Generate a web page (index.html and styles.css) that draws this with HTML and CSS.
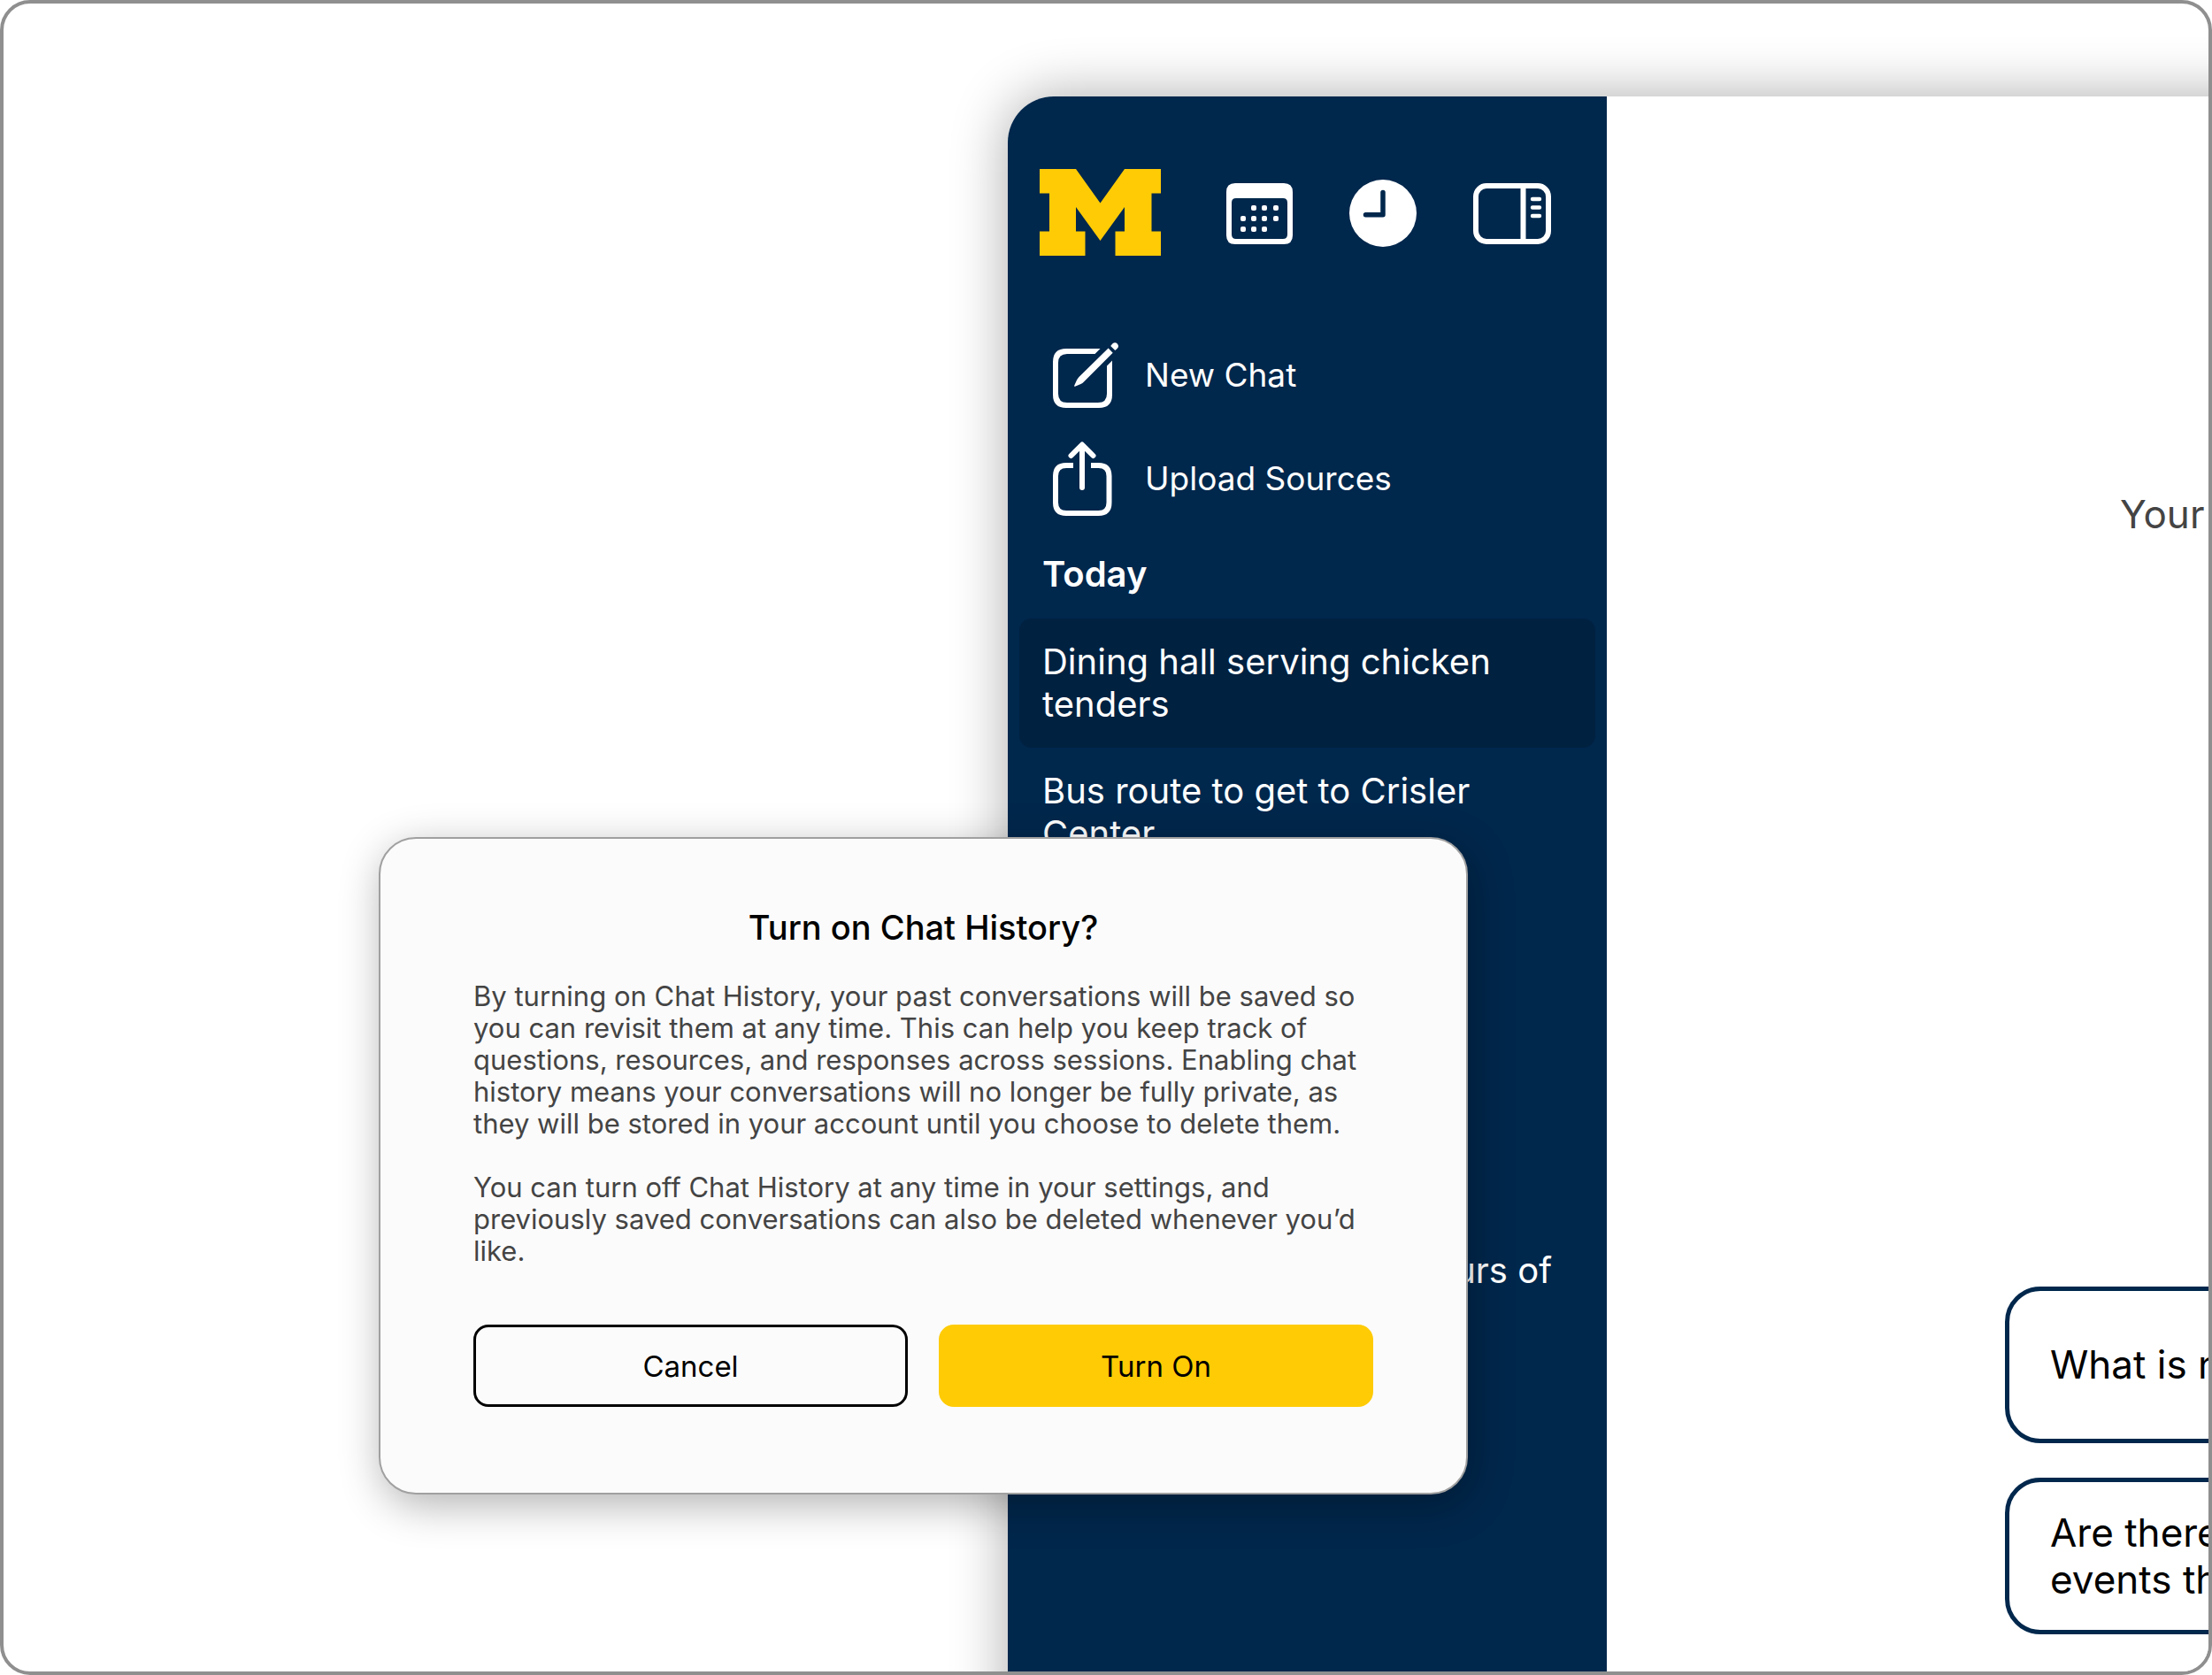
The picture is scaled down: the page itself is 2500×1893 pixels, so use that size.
FILE: index.html
```html
<!DOCTYPE html>
<html lang="en">
<head>
<meta charset="utf-8">
<title>Chat History</title>
<link rel="stylesheet" href="styles.css">
</head>
<body>
<div class="frame">
  <div class="window">
    <aside class="sidebar">
      <header class="sidebar-header">
        <svg class="logo" width="137" height="98" viewBox="0 0 137 98" role="img" aria-label="Michigan"><path fill="#ffcb05" d="M0 0H41L68.500 38.500L96 0H137V27.500H126.500V70.500H137V98H85.500V70.500H96V43L68.500 81L41 43V70.500H51.500V98H0V70.500H11V27.500H0Z"/></svg>
        <nav class="tools">
          <button class="tool" type="button" aria-label="Calendar">
            <svg width="75" height="69" viewBox="0 0 75 69" fill="#fff"><path fill-rule="evenodd" d="M10 0H65Q75 0 75 10V59Q75 69 65 69H10Q0 69 0 59V10Q0 0 10 0ZM11 17Q6 17 6 22V58Q6 63 11 63H64Q69 63 69 58V22Q69 17 64 17Z"/>
              <rect x="28" y="25" width="6" height="6" rx="2"/><rect x="40" y="25" width="6" height="6" rx="2"/><rect x="53" y="25" width="6" height="6" rx="2"/>
              <rect x="16" y="37" width="6" height="6" rx="2"/><rect x="28" y="37" width="6" height="6" rx="2"/><rect x="40" y="37" width="6" height="6" rx="2"/><rect x="53" y="37" width="6" height="6" rx="2"/>
              <rect x="16" y="49" width="6" height="6" rx="2"/><rect x="28" y="49" width="6" height="6" rx="2"/><rect x="40" y="49" width="6" height="6" rx="2"/></svg>
          </button>
          <button class="tool" type="button" aria-label="History">
            <svg width="76" height="76" viewBox="0 0 76 76"><circle cx="38" cy="38" r="38" fill="#fff"/><path d="M38 14.500V39.700H18.500" fill="none" stroke="#00274c" stroke-width="5.500" stroke-linecap="round" stroke-linejoin="round"/></svg>
          </button>
          <button class="tool" type="button" aria-label="Toggle panel">
            <svg width="88" height="69" viewBox="0 0 88 69" fill="none" stroke="#fff" stroke-width="6"><rect x="3" y="3" width="82" height="63" rx="12"/><path d="M56.500 3V66"/><path d="M67 18H75M67 27.500H75M67 37H75" stroke-width="4.400" stroke-linecap="round"/></svg>
          </button>
        </nav>
      </header>
      <div class="actions">
        <button class="action" type="button">
          <svg width="74" height="74" viewBox="0 0 74 74"><path d="M53.500 7H15Q0 7 0 22V59Q0 74 15 74H52Q67 74 67 59V20.500L61 26.500V58Q61 68 51 68H16Q6 68 6 58V23Q6 13 16 13H47.500Z" fill="#fff"/><path d="M62.600 6.500L67.700 11.700L35 44.500Q33.500 46 31.500 47L25 49.800Q23.700 50 24.200 48.800L27 42.500Q28 40.500 29.500 39ZM65.200 4L67.300 1.600Q70 -1.200 72.800 1.400Q75.300 4.200 72.600 6.900L70.300 9.100Z" fill="#fff"/></svg>
          <span>New Chat</span>
        </button>
        <button class="action" type="button">
          <svg width="74" height="84" viewBox="0 0 74 84" fill="none" stroke="#fff" stroke-width="6"><path d="M23 27H15Q3 27 3 39V69Q3 81 15 81H51.500Q63.500 81 63.500 69V39Q63.500 27 51.500 27H43"/><path d="M33 4V52M20.500 16L33 3.500L45.500 16" stroke-linecap="round" stroke-linejoin="round"/></svg>
          <span>Upload Sources</span>
        </button>
      </div>
      <h2 class="group-title">Today</h2>
      <nav class="chats">
        <a class="chat chat-active" href="#">Dining hall serving chicken tenders</a>
        <a class="chat" href="#">Bus route to get to Crisler Center</a>
      </nav>
      <nav class="chats chats-older">
        <a class="chat chat-end" href="#">hours of</a>
      </nav>
    </aside>
    <main class="main">
      <p class="intro">Your</p>
      <div class="prompts">
        <button class="prompt" type="button">What is next</button>
        <button class="prompt" type="button">Are there any<br>events this</button>
      </div>
    </main>
  </div>
  <section class="dialog" role="dialog" aria-labelledby="dialog-title">
    <h1 class="dialog-title" id="dialog-title">Turn on Chat History?</h1>
    <div class="dialog-text">
      <p>By turning on Chat History, your past conversations will be saved so you can revisit them at any time. This can help you keep track of questions, resources, and responses across sessions. Enabling chat history means your conversations will no longer be fully private, as they will be stored in your account until you choose to delete them.</p>
      <p>You can turn off Chat History at any time in your settings, and previously saved conversations can also be deleted whenever you’d like.</p>
    </div>
    <div class="dialog-buttons">
      <button class="btn btn-outline" type="button">Cancel</button>
      <button class="btn btn-primary" type="button">Turn On</button>
    </div>
  </section>
</div>
</body>
</html>
```
FILE: styles.css
```css
* { box-sizing: border-box; }

body {
  margin: 0;
  background: #fff;
  font-family: Inter, "Liberation Sans", sans-serif;
}

h1, h2, p { margin: 0; }

button {
  padding: 0;
  border: 0;
  background: none;
  color: inherit;
  font: inherit;
  text-align: left;
  cursor: pointer;
}

svg { display: block; overflow: visible; flex: none; }

.frame {
  position: relative;
  display: flex;
  min-height: 100vh;
  padding: 105px 0 0 1135px;
  border: 4px solid #8f8f8f;
  border-radius: 34px;
  overflow: hidden;
}

/* The window runs past the frame's right and bottom edges. */
.window {
  display: flex;
  flex: 1;
  min-width: 0;
  margin: 0 -100px -100px 0;
  border-top-left-radius: 52px;
  background: #fff;
  box-shadow: 0 0 64px rgba(0, 0, 0, 0.33);
}

.sidebar {
  flex: none;
  width: 677px;
  padding: 82px 13px 0;
  border-top-left-radius: 52px;
  background: #00274c;
  color: #fff;
}

.sidebar-header {
  display: flex;
  align-items: center;
  gap: 74px;
  padding: 0 23px;
}

.tools {
  display: flex;
  align-items: center;
  gap: 64px;
  padding-top: 2px;
}

.actions {
  display: flex;
  flex-direction: column;
  gap: 38px;
  margin-top: 98px;
  padding: 0 38px;
}

.action {
  display: flex;
  align-items: center;
  gap: 30px;
  font-size: 37px;
  line-height: 48px;
}

.group-title {
  margin-top: 42px;
  padding: 0 26px;
  font-size: 40px;
  font-weight: 600;
  line-height: 48px;
}

.chats { margin-top: 26px; }

.chats-older { margin-top: 396px; }

.chat {
  display: block;
  padding: 25px 26px;
  border-radius: 14px;
  color: #fff;
  font-size: 40px;
  line-height: 48px;
  text-decoration: none;
}

.chat-active { background: #002140; }

.chat-end { padding-right: 49px; text-align: right; }

.main {
  display: flex;
  flex: 1;
  flex-direction: column;
  justify-content: space-between;
  min-width: 0;
  padding: 445px 0 142px 450px;
}

.intro {
  padding-left: 130px;
  color: #444;
  font-size: 44px;
  line-height: 54px;
}

.prompts {
  display: flex;
  flex-direction: column;
  gap: 39px;
}

.prompt {
  width: 800px;
  min-height: 177px;
  padding: 0 46px;
  border: 5px solid #00274c;
  border-radius: 40px;
  color: #000;
  font-size: 44px;
  line-height: 53px;
  white-space: nowrap;
}

.dialog {
  position: absolute;
  top: 942px;
  left: 424px;
  width: 1231px;
  padding: 76px 105px 97px;
  border: 2px solid #a0a0a0;
  border-radius: 42px;
  background: #fbfbfb;
  box-shadow: 4px 12px 48px rgba(0, 0, 0, 0.3);
}

.dialog-title {
  color: #000;
  font-size: 38px;
  font-weight: 500;
  line-height: 48px;
  text-align: center;
}

.dialog-text {
  display: flex;
  flex-direction: column;
  gap: 36px;
  margin-top: 36px;
  color: #444;
  font-size: 31px;
  line-height: 36px;
}

.dialog-buttons {
  display: grid;
  grid-template-columns: 1fr 1fr;
  gap: 35px;
  margin-top: 65px;
}

.btn {
  height: 93px;
  border-radius: 17px;
  color: #000;
  font-size: 33px;
  line-height: 42px;
  text-align: center;
}

.btn-outline { border: 3px solid #000; }

.btn-primary { background: #ffcb05; }
```
